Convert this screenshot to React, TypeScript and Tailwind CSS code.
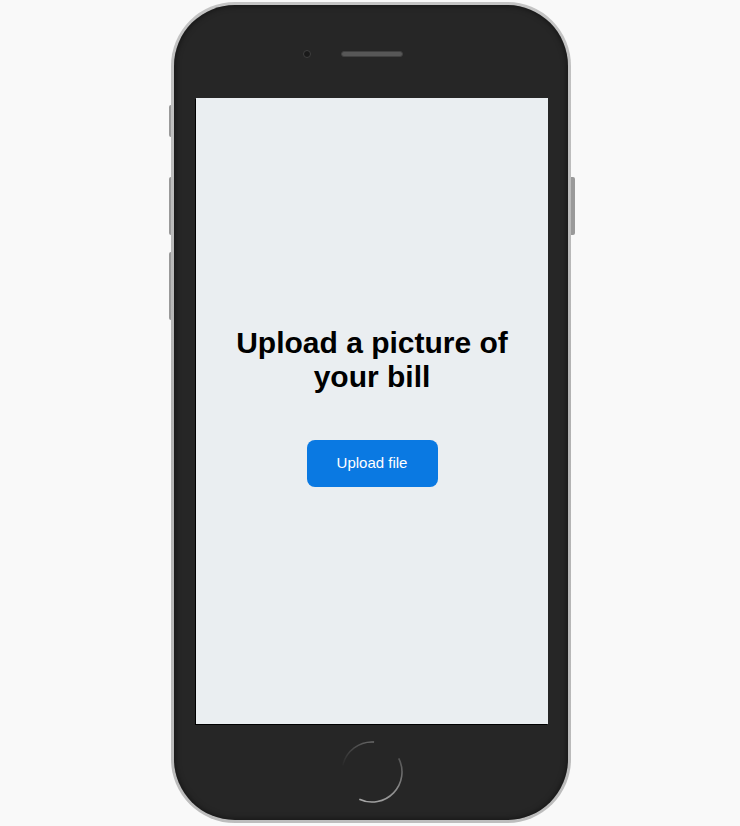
import React from "react";

export default function App() {
  return (
    <div className="w-[740px] h-[826px] bg-[#f9f9f9] flex justify-center pt-[2px]" style={{ fontFamily: '"Liberation Sans", Arial, sans-serif' }}>
      <div className="relative w-[400px] h-[821px] ml-[2px]">
        {/* side buttons */}
        <div className="absolute left-[-2px] top-[103px] w-[4px] h-[32px] bg-[#9a9a9a] rounded-l-[2px]" />
        <div className="absolute left-[-2px] top-[175px] w-[4px] h-[58px] bg-[#9a9a9a] rounded-l-[2px]" />
        <div className="absolute left-[-2px] top-[250px] w-[4px] h-[68px] bg-[#9a9a9a] rounded-l-[2px]" />
        <div className="absolute right-[-4px] top-[175px] w-[5px] h-[58px] bg-[#9a9a9a] rounded-r-[2px]" />
        <div className="relative h-full w-full rounded-[64px] bg-gradient-to-b from-[#c4c4c4] via-[#b2b2b2] to-[#bdbdbd] p-[3px]">
          <div className="h-full w-full rounded-[61px] bg-[#262626] flex flex-col shadow-[inset_0_0_6px_rgba(0,0,0,0.6)]">
            <div className="h-[93px] flex items-center justify-center pl-[2px] pt-[4px]">
              <div className="w-[8px] h-[8px] rounded-full bg-[#1a1a1a] border border-[#3e3e3e] mr-[30px]" />
              <div className="w-[62px] h-[6px] rounded-full bg-[#575757] border border-[#404040]" />
              <div className="w-[38px]" />
            </div>
            <div className="ml-[22px] w-[352px] h-[626px] bg-[#eaeef1] shadow-[-1px_1px_0_#000] flex flex-col items-center pt-[228px]">
              <h1 className="text-[30px] leading-[34px] font-bold text-black text-center w-[290px]">
                Upload a picture of your bill
              </h1>
              <button className="mt-[46px] w-[131px] h-[47px] rounded-lg bg-[#0a79e2] text-white text-[15px]">
                Upload file
              </button>
            </div>
            <div className="flex-1 flex items-center justify-center pl-[1px]">
              <svg width="66" height="66" viewBox="0 0 66 66">
                <defs>
                  <linearGradient id="hb1" x1="60" y1="19" x2="20" y2="60" gradientUnits="userSpaceOnUse">
                    <stop offset="0" stopColor="#555555" />
                    <stop offset="0.4" stopColor="#8a8a8a" />
                    <stop offset="1" stopColor="#a8a8a8" />
                  </linearGradient>
                  <linearGradient id="hb2" x1="4" y1="26" x2="35" y2="3" gradientUnits="userSpaceOnUse">
                    <stop offset="0" stopColor="#2a2a2a" />
                    <stop offset="1" stopColor="#6a6a6a" />
                  </linearGradient>
                </defs>
                <path d="M 59.73 19.38 A 30 30 0 0 1 20.32 60.19" fill="none" stroke="url(#hb1)" strokeWidth="1.6" />
                <path d="M 3.77 26.25 A 30 30 0 0 1 35.09 3.07" fill="none" stroke="url(#hb2)" strokeWidth="1.4" />
              </svg>
            </div>
          </div>
        </div>
      </div>
    </div>
  );
}
